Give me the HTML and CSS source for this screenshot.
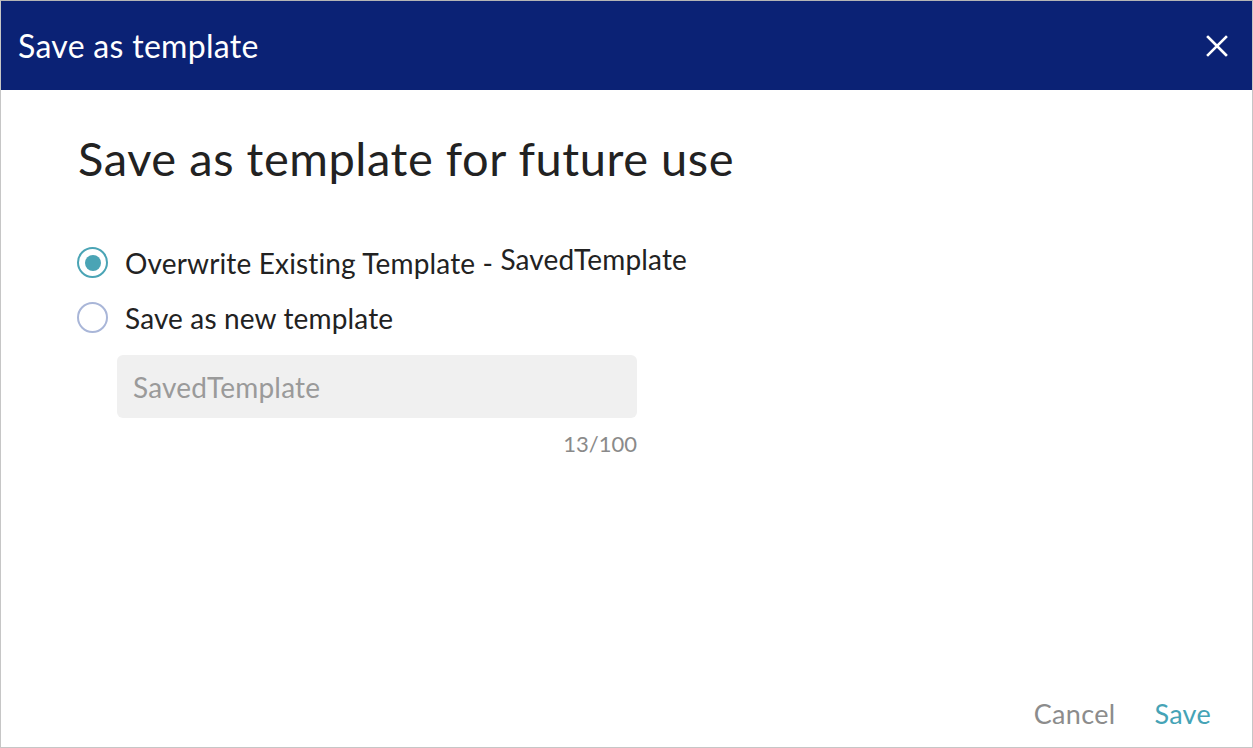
FILE: index.html
```html
<!DOCTYPE html>
<html>
<head>
<meta charset="utf-8">
<link rel="stylesheet" href="styles.css">
</head>
<body>
<div class="dialog">
  <div class="header">
    <span class="header-title">Save as template</span>
    <button class="close" aria-label="Close">
      <svg width="22" height="22" viewBox="0 0 22 22"><path d="M2 2 L20 20 M20 2 L2 20" stroke="#fff" stroke-width="2.6" stroke-linecap="square"/></svg>
    </button>
  </div>
  <div class="body">
    <h1 class="title">Save as template for future use</h1>
    <div class="options">
      <label class="option">
        <span class="radio checked"><span class="dot"></span></span>
        <span class="label">Overwrite Existing Template - <span class="name">SavedTemplate</span></span>
      </label>
      <label class="option">
        <span class="radio"></span>
        <span class="label">Save as new template</span>
      </label>
    </div>
    <div class="field">
      <div class="input">SavedTemplate</div>
      <div class="counter">13/100</div>
    </div>
  </div>
  <div class="footer">
    <button class="btn cancel">Cancel</button>
    <button class="btn save">Save</button>
  </div>
</div>
</body>
</html>
```
FILE: styles.css
```css
* { box-sizing: border-box; }
html, body { margin: 0; padding: 0; }
body {
  width: 1253px;
  height: 748px;
  font-family: "Lato", "Open Sans", sans-serif;
  background: #fff;
  overflow: hidden;
}
.dialog {
  width: 1253px;
  height: 748px;
  border: 1px solid #c6c6c6;
  border-top-color: #b5b5b5;
  display: flex;
  flex-direction: column;
}
.header {
  height: 89px;
  background: #0b2275;
  display: flex;
  align-items: center;
  justify-content: space-between;
  padding: 0 24px 0 17px;
  flex-shrink: 0;
}
.header-title {
  color: #fff;
  font-size: 32px;
  letter-spacing: 0.3px;
}
.close {
  background: none;
  border: 0;
  padding: 0;
  display: flex;
  cursor: pointer;
}
.body {
  flex: 1;
  padding: 40px 0 0 76px;
}
.title {
  margin: 0 0 0 1px;
  font-size: 47px;
  font-weight: 400;
  color: #222;
  line-height: 56px;
  letter-spacing: 0.55px;
}
.options {
  margin-top: 61px;
  display: flex;
  flex-direction: column;
  gap: 24px;
}
.option {
  display: flex;
  align-items: center;
  gap: 17px;
  height: 31px;
}
.radio {
  width: 31px;
  height: 31px;
  border-radius: 50%;
  border: 2px solid #a9b6d8;
  display: flex;
  align-items: center;
  justify-content: center;
  flex-shrink: 0;
}
.radio.checked { border-color: #4aa4b5; }
.dot {
  width: 16px;
  height: 16px;
  border-radius: 50%;
  background: #4aa4b5;
}
.label {
  font-size: 28px;
  color: #222;
  letter-spacing: 0.15px;
}
.name {
  position: relative;
  top: -4px;
}
.field {
  margin: 22px 0 0 40px;
  width: 520px;
}
.input {
  height: 63px;
  background: #f0f0f0;
  border-radius: 6px;
  padding: 0 16px;
  display: flex;
  align-items: center;
  font-size: 28px;
  color: #9a9a9a;
  letter-spacing: 0.2px;
}
.counter {
  text-align: right;
  font-size: 22px;
  color: #8a8a8a;
  margin-top: 12px;
}
.footer {
  display: flex;
  justify-content: flex-end;
  gap: 39px;
  padding: 0 41px 17px 0;
}
.btn {
  background: none;
  border: 0;
  padding: 0;
  font-family: inherit;
  font-size: 27px;
  letter-spacing: 0.3px;
  cursor: pointer;
}
.cancel { color: #8c8c8c; }
.save { color: #45a3b6; }
```
